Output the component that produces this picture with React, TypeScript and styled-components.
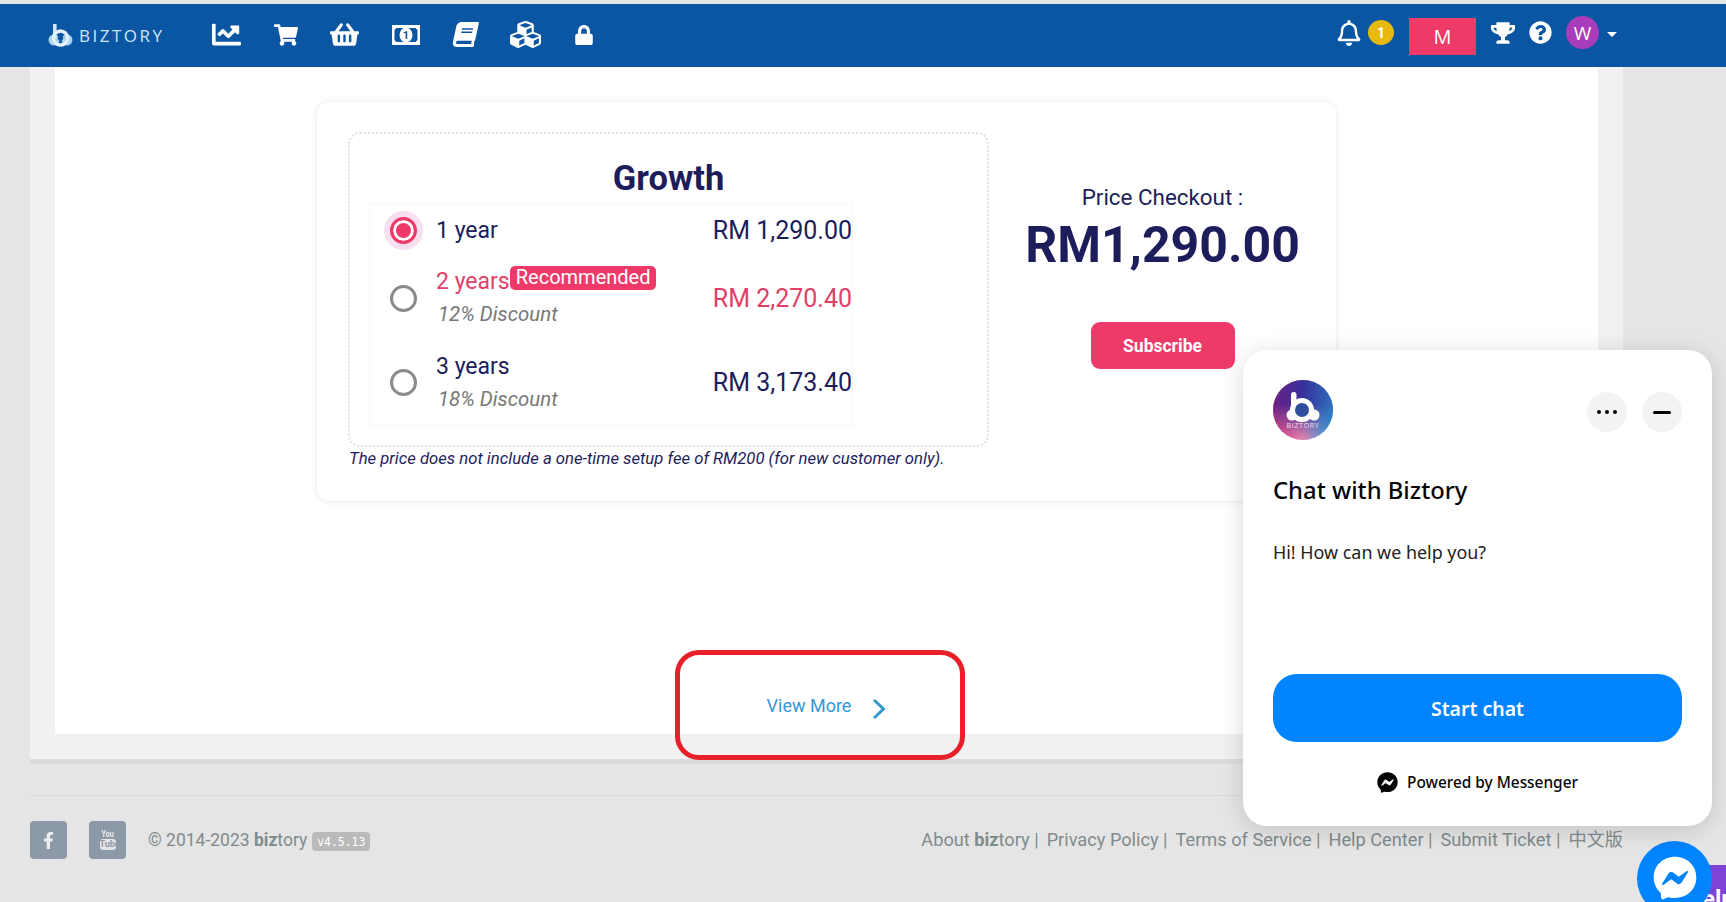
import React from "react";
import styled, { createGlobalStyle } from "styled-components";
import {
  FaBook,
  FaChartLine,
  FaCubes,
  FaFacebookF,
  FaFacebookMessenger,
  FaLock,
  FaQuestionCircle,
  FaRegBell,
  FaShoppingBasket,
  FaShoppingCart,
  FaTrophy,
} from "react-icons/fa";

const navy = "#1d1d5c";
const pink = "#ee3a69";

const GlobalStyle = createGlobalStyle`
  html, body {
    margin: 0;
    height: 100%;
    overflow: hidden;
    background: #e5e5e5;
    font-family: Roboto, "Noto Sans CJK SC", sans-serif;
  }
  * { box-sizing: border-box; }
`;

const Page = styled.div`
  position: relative;
  width: 1726px;
  height: 902px;
  overflow: hidden;
  padding-top: 4px;
`;

const Nav = styled.header`
  height: 63px;
  background: #0a56a3;
  display: flex;
  align-items: center;
  padding: 0 109px 0 48px;
  color: #fff;
`;

const Brand = styled.div`
  display: flex;
  align-items: center;
  gap: 6px;
  width: 164px;
  color: #cfe6f7;
  font-size: 17px;
  letter-spacing: 2.5px;
  font-family: "Open Sans", sans-serif;
`;

const NavIcons = styled.nav`
  display: flex;
  align-items: center;
  gap: 32.7px;
  margin-bottom: 2px;
  & > svg { display: block; }
`;

const NavRight = styled.div`
  margin-left: auto;
  margin-bottom: 6px;
  display: flex;
  align-items: center;
`;

const BellBadge = styled.span`
  width: 26px;
  height: 25px;
  margin-left: 6px;
  border-radius: 50%;
  background: #eab90f;
  font-size: 14px;
  font-weight: 700;
  display: flex;
  align-items: center;
  justify-content: center;
`;

const PlanTag = styled.div`
  width: 67px;
  height: 37px;
  margin: 8px 15px 0 15px;
  background: ${pink};
  font-size: 20px;
  font-family: "Open Sans", sans-serif;
  display: flex;
  align-items: center;
  justify-content: center;
`;

const UserAvatar = styled.div`
  width: 33px;
  height: 33px;
  margin-left: 14px;
  border-radius: 50%;
  background: #a93cbb;
  font-size: 19px;
  font-family: "Open Sans", sans-serif;
  display: flex;
  align-items: center;
  justify-content: center;
`;

const Caret = styled.span`
  width: 0;
  height: 0;
  margin: 4px 0 0 8px;
  border-left: 5px solid transparent;
  border-right: 5px solid transparent;
  border-top: 5px solid #fff;
`;

const Panel = styled.main`
  margin: 0 103px 0 30px;
  padding: 0 25px 25px;
  background: #f1f1f1;
  box-shadow: 0 5px 0 #dcdcdc;
`;

const Sheet = styled.section`
  height: 667px;
  background: #fff;
  display: flex;
  flex-direction: column;
  align-items: center;
  padding-top: 35px;
`;

const Card = styled.div`
  width: 1019px;
  height: 399px;
  padding: 30px 0 0 31px;
  border-radius: 12px;
  background: #fff;
  box-shadow: 0 0 6px rgba(0, 0, 0, 0.1);
  display: flex;
`;

const PlanColumn = styled.div`
  width: 641px;
`;

const PlanBox = styled.div`
  height: 315px;
  padding: 18px 0 0 19px;
  border: 2px dotted #e0e0e0;
  border-radius: 12px;
`;

const PlanTitle = styled.h2`
  margin: 0 0 0 -19px;
  height: 51px;
  line-height: 53px;
  text-align: center;
  font-size: 34.5px;
  font-weight: 700;
  color: ${navy};
`;

const OptionTable = styled.div`
  width: 484px;
  border: 1px dotted #f0f0f0;
`;

const OptionRow = styled.div<{ $h: number; $on?: boolean }>`
  height: ${({ $h }) => $h}px;
  display: flex;
  align-items: center;
  color: ${({ $on }) => ($on ? "#e33e68" : navy)};
  font-size: 23px;
`;

const RadioCell = styled.div`
  width: 66px;
  display: flex;
  justify-content: center;
`;

const Radio = styled.span<{ $on?: boolean }>`
  width: 27px;
  height: 27px;
  border-radius: 50%;
  border: 3px solid ${({ $on }) => ($on ? pink : "#8a8a8a")};
  background: ${({ $on }) => ($on ? pink : "#fff")};
  box-shadow: ${({ $on }) =>
    $on ? `inset 0 0 0 3px #fff, 0 0 0 6px #f6dff0` : "none"};
`;

const OptionText = styled.div`
  flex: 1;
`;

const OptionName = styled.div`
  height: 33px;
  line-height: 33px;
  display: flex;
`;

const Recommended = styled.span`
  height: 24px;
  line-height: 23px;
  margin-top: 1px;
  padding: 0 6px;
  border-radius: 5px;
  background: ${pink};
  color: #fff;
  font-size: 20px;
`;

const Discount = styled.div`
  height: 33px;
  line-height: 33px;
  padding-left: 2px;
  font-style: italic;
  font-size: 20.4px;
  color: #777;
`;

const OptionPrice = styled.div`
  font-size: 25px;
`;

const Note = styled.p`
  margin: 1px 0 0 1px;
  font-size: 16.7px;
  line-height: 22px;
  font-style: italic;
  color: ${navy};
`;

const Checkout = styled.div`
  flex: 1;
  padding-top: 52px;
  display: flex;
  flex-direction: column;
  align-items: center;
  color: ${navy};
`;

const CheckoutLabel = styled.div`
  font-size: 22.4px;
  line-height: 26px;
`;

const CheckoutAmount = styled.div`
  margin-top: 7px;
  font-size: 50px;
  line-height: 56px;
  font-weight: 700;
`;

const Subscribe = styled.button`
  width: 144px;
  height: 47px;
  margin-top: 49px;
  border: 0;
  border-radius: 9px;
  background: ${pink};
  color: #fff;
  font-family: Roboto, sans-serif;
  font-size: 17.5px;
  font-weight: 700;
`;

const ViewMore = styled.a`
  margin-top: auto;
  height: 58px;
  display: flex;
  align-items: center;
  gap: 21px;
  color: #3498d3;
  font-size: 18px;
`;

const Chevron = styled.svg`
  margin-top: 8px;
  display: block;
`;

const Footer = styled.footer`
  margin: 36px 103px 0 30px;
  padding-top: 25px;
  border-top: 1px solid #dadada;
  display: flex;
  align-items: center;
  color: #7f8c8d;
  font-size: 17.5px;
`;

const Social = styled.a<{ $gap?: number }>`
  width: 37px;
  height: 38px;
  margin-right: ${({ $gap }) => $gap}px;
  border-radius: 4px;
  background: #8c9aa8;
  color: #eee;
  display: flex;
  flex-direction: column;
  align-items: center;
  justify-content: center;
  font-size: 17px;
`;

const TubeTop = styled.span`
  font-size: 9px;
  line-height: 9px;
  font-weight: 700;
  transform: scaleX(0.8);
`;

const TubeBottom = styled.span`
  width: 16px;
  height: 11px;
  line-height: 11px;
  text-align: center;
  border-radius: 3px;
  background: #e4e4e4;
  color: #8c9aa8;
  font-size: 9px;
  font-weight: 700;
`;

const Version = styled.code`
  margin: 3px 0 0 5px;
  padding: 0 5px;
  height: 19px;
  line-height: 20px;
  border-radius: 4px;
  background: #bababa;
  color: #fff;
  font-family: "DejaVu Sans Mono", monospace;
  font-size: 11.4px;
`;

const FooterLinks = styled.div`
  margin-left: auto;
  display: flex;
  gap: 8px;
  font-size: 18.2px;
  line-height: 24px;
  & > span { height: 24px; }
`;

const ChatCard = styled.aside`
  position: absolute;
  left: 1243px;
  top: 350px;
  width: 469px;
  height: 476px;
  padding: 30px 30px 0;
  border-radius: 24px;
  background: #fff;
  box-shadow: 0 4px 24px rgba(0, 0, 0, 0.15);
  font-family: "Noto Sans", sans-serif;
  color: #050505;
`;

const ChatHead = styled.div`
  height: 60px;
  display: flex;
  align-items: center;
  gap: 15px;
`;

const RoundButton = styled.span`
  width: 40px;
  height: 40px;
  margin-top: 4px;
  border-radius: 50%;
  background: #f3f3f3;
  display: flex;
  align-items: center;
  justify-content: center;
  &:first-of-type { margin-left: auto; }
`;

const MinusBar = styled.span`
  width: 18px;
  height: 3px;
  border-radius: 2px;
  background: #050505;
`;

const ChatTitle = styled.h3`
  margin: 32px 0 0;
  font-size: 23.8px;
  line-height: 36px;
  font-weight: 500;
`;

const ChatText = styled.p`
  margin: 31px 0 0;
  font-size: 17.9px;
  line-height: 26px;
  color: #222;
`;

const StartChat = styled.button`
  display: block;
  width: 100%;
  height: 68px;
  margin-top: 109px;
  border: 0;
  border-radius: 24px;
  background: #0084ff;
  color: #fff;
  font-family: "Noto Sans", sans-serif;
  font-size: 19.5px;
  font-weight: 600;
`;

const Powered = styled.div`
  margin-top: 30px;
  display: flex;
  align-items: center;
  justify-content: center;
  gap: 9px;
  font-size: 15.4px;
  font-weight: 500;
`;

const HelpTab = styled.div`
  position: absolute;
  left: 1680px;
  top: 865px;
  width: 90px;
  height: 70px;
  padding-left: 5px;
  border-radius: 30px;
  background: #7f43d6;
  color: #fff;
  font-size: 24px;
  font-weight: 700;
  line-height: 68px;
`;

const Fab = styled.div`
  position: absolute;
  left: 1637px;
  top: 841px;
  width: 75px;
  height: 75px;
  padding-top: 15px;
  border-radius: 50%;
  background: #0084ff;
  color: #fff;
  display: flex;
  justify-content: center;
  font-size: 44px;
`;

const Callout = styled.div`
  position: absolute;
  left: 675px;
  top: 650px;
  width: 290px;
  height: 110px;
  border: 5px solid #e8202a;
  border-radius: 24px;
`;

function BrandMark() {
  return (
    <svg width="25" height="23" viewBox="0 0 25 23">
      <circle cx="6" cy="16" r="5.5" fill="#a9d3ef" />
      <circle cx="19" cy="16" r="5.5" fill="#a9d3ef" />
      <rect x="5" y="0" width="3.6" height="14" fill="#cfe6f7" />
      <circle cx="12.5" cy="14" r="7" fill="none" stroke="#e4f2fb" strokeWidth="3.4" />
      <circle cx="12.5" cy="14" r="2.6" fill="#0a56a3" />
    </svg>
  );
}

function BillIcon() {
  return (
    <svg width="28" height="20" viewBox="0 0 28 20">
      <path fillRule="evenodd" fill="#fff" d="M0 0h28v20H0zM4.500 3 2.500 5v10l2 2h19l2-2V5l-2-2z" />
      <ellipse cx="14" cy="10" rx="6.500" ry="7.500" fill="#fff" />
      <text x="14" y="14" textAnchor="middle" fontSize="11" fontWeight="700" fontFamily="Roboto" fill="#0a56a3">1</text>
    </svg>
  );
}

function DotsIcon() {
  return (
    <svg width="20" height="4" viewBox="0 0 20 4">
      <circle cx="2" cy="2" r="2" fill="#050505" />
      <circle cx="10" cy="2" r="2" fill="#050505" />
      <circle cx="18" cy="2" r="2" fill="#050505" />
    </svg>
  );
}

function BizLogo() {
  return (
    <svg width="60" height="60" viewBox="0 0 60 60">
      <defs>
        <linearGradient id="bizTop" x1="0" y1="0" x2="1" y2="0">
          <stop offset="0" stopColor="#6b2186" />
          <stop offset="0.5" stopColor="#37309b" />
          <stop offset="1" stopColor="#2f6fba" />
        </linearGradient>
        <linearGradient id="bizBottom" x1="0" y1="0" x2="1" y2="0">
          <stop offset="0" stopColor="#e0467f" />
          <stop offset="0.5" stopColor="#d980b0" />
          <stop offset="1" stopColor="#1fa3dc" />
        </linearGradient>
        <linearGradient id="bizFade" x1="0" y1="0" x2="0" y2="1">
          <stop offset="0.4" stopColor="#fff" />
          <stop offset="0.95" stopColor="#000" />
        </linearGradient>
        <mask id="bizMask">
          <rect width="60" height="60" fill="url(#bizFade)" />
        </mask>
        <clipPath id="bizClip">
          <circle cx="30" cy="30" r="30" />
        </clipPath>
      </defs>
      <g clipPath="url(#bizClip)">
        <rect width="60" height="60" fill="url(#bizBottom)" />
        <rect width="60" height="60" fill="url(#bizTop)" mask="url(#bizMask)" />
      </g>
      <circle cx="19" cy="35" r="5.500" fill="#fff" />
      <circle cx="41" cy="35" r="5.500" fill="#fff" />
      <rect x="18" y="12" width="5.500" height="22" rx="2.700" fill="#fff" />
      <circle cx="29" cy="30" r="9.500" fill="#2f4f9e" stroke="#fff" strokeWidth="5" />
      <text x="30" y="48" textAnchor="middle" fontSize="7" letterSpacing="0.7" fontFamily="Open Sans" fill="#f1e3ef">BIZTORY</text>
    </svg>
  );
}

export default function App() {
  return (
    <Page>
      <GlobalStyle />
      <Nav>
        <Brand>
          <BrandMark />
          BIZTORY
        </Brand>
        <NavIcons>
          <FaChartLine size={29} />
          <FaShoppingCart size={24} />
          <FaShoppingBasket size={29} />
          <BillIcon />
          <FaBook size={25} style={{ transform: "skewX(-12deg)" }} />
          <FaCubes size={31} />
          <FaLock size={20} />
        </NavIcons>
        <NavRight>
          <FaRegBell size={26} />
          <BellBadge>1</BellBadge>
          <PlanTag>M</PlanTag>
          <FaTrophy size={24} />
          <FaQuestionCircle size={23} style={{ marginLeft: 14 }} />
          <UserAvatar>W</UserAvatar>
          <Caret />
        </NavRight>
      </Nav>

      <Panel>
        <Sheet>
          <Card>
            <PlanColumn>
              <PlanBox>
                <PlanTitle>Growth</PlanTitle>
                <OptionTable>
                  <OptionRow $h={52}>
                    <RadioCell>
                      <Radio $on />
                    </RadioCell>
                    <OptionText>1 year</OptionText>
                    <OptionPrice>RM 1,290.00</OptionPrice>
                  </OptionRow>
                  <OptionRow $h={84} $on>
                    <RadioCell>
                      <Radio />
                    </RadioCell>
                    <OptionText>
                      <OptionName>
                        2 years<Recommended>Recommended</Recommended>
                      </OptionName>
                      <Discount>12% Discount</Discount>
                    </OptionText>
                    <OptionPrice>RM 2,270.40</OptionPrice>
                  </OptionRow>
                  <OptionRow $h={85}>
                    <RadioCell>
                      <Radio />
                    </RadioCell>
                    <OptionText>
                      <OptionName>3 years</OptionName>
                      <Discount>18% Discount</Discount>
                    </OptionText>
                    <OptionPrice>RM 3,173.40</OptionPrice>
                  </OptionRow>
                </OptionTable>
              </PlanBox>
              <Note>The price does not include a one-time setup fee of RM200 (for new customer only).</Note>
            </PlanColumn>
            <Checkout>
              <CheckoutLabel>Price Checkout :</CheckoutLabel>
              <CheckoutAmount>RM1,290.00</CheckoutAmount>
              <Subscribe>Subscribe</Subscribe>
            </Checkout>
          </Card>
          <ViewMore>
            View More
            <Chevron width="14" height="22" viewBox="0 0 14 22">
              <path d="M2 2l9.500 9L2 20" fill="none" stroke="#3498d3" strokeWidth="3" />
            </Chevron>
          </ViewMore>
        </Sheet>
      </Panel>

      <Footer>
        <Social $gap={22}>
          <FaFacebookF />
        </Social>
        <Social $gap={22}>
          <TubeTop>You</TubeTop>
          <TubeBottom>Tube</TubeBottom>
        </Social>
        <span>
          © 2014-2023 <b>biz</b>tory
        </span>
        <Version>v4.5.13</Version>
        <FooterLinks>
          <span>
            About <b>biz</b>tory |
          </span>
          <span>Privacy Policy |</span>
          <span>Terms of Service |</span>
          <span>Help Center |</span>
          <span>Submit Ticket |</span>
          <span>中文版</span>
        </FooterLinks>
      </Footer>

      <HelpTab>Help</HelpTab>
      <Fab>
        <FaFacebookMessenger />
      </Fab>

      <ChatCard>
        <ChatHead>
          <BizLogo />
          <RoundButton>
            <DotsIcon />
          </RoundButton>
          <RoundButton>
            <MinusBar />
          </RoundButton>
        </ChatHead>
        <ChatTitle>Chat with Biztory</ChatTitle>
        <ChatText>Hi! How can we help you?</ChatText>
        <StartChat>Start chat</StartChat>
        <Powered>
          <FaFacebookMessenger size={21} />
          Powered by Messenger
        </Powered>
      </ChatCard>

      <Callout />
    </Page>
  );
}
